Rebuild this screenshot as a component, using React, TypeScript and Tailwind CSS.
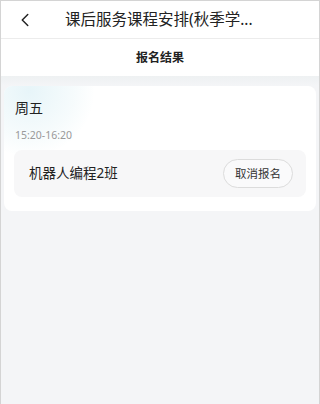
import { ChevronLeft } from 'lucide-react'

const FONT = { fontFamily: '"Noto Sans", "Noto Sans CJK SC", sans-serif' }

export default function App() {
  return (
    <div
      className="w-[320px] h-[404px] flex flex-col bg-[#f4f5f7] border-x border-t border-[#d4d4d4] overflow-hidden"
      style={FONT}
    >
      <div className="h-[37px] shrink-0 flex items-center bg-white">
        <ChevronLeft className="w-[22px] h-[22px] ml-[13px] text-[#222]" strokeWidth={1.6} />
        <div className="ml-[29px] text-[15.5px] text-[#222] leading-none">课后服务课程安排(秋季学...</div>
      </div>
      <div className="h-px bg-[#ececec]" />
      <div className="h-[37px] shrink-0 flex items-center justify-center bg-white">
        <span className="text-[12px] font-bold text-[#222]">报名结果</span>
      </div>
      <div className="h-[10px] bg-gradient-to-b from-[#eef1f2] to-[#f4f5f7]" />
      <div className="mx-[3px] rounded-[8px] bg-white relative overflow-hidden pb-[14px]">
        <div className="absolute -left-[40px] -top-[60px] w-[130px] h-[130px] rounded-full bg-[radial-gradient(circle,rgba(225,242,247,0.8)_0%,rgba(238,248,250,0.5)_50%,rgba(255,255,255,0)_72%)]" />
        <div className="relative">
          <div className="pl-[11px] pt-[12px] text-[14px] text-[#222] leading-[20px]">周五</div>
          <div className="pl-[11px] mt-[10px] text-[10.5px] text-[#999] leading-[14px]">15:20-16:20</div>
          <div className="mx-[10px] mt-[8px] h-[47px] rounded-[8px] bg-[#f7f7f8] flex items-center justify-between pl-[15px] pr-[13px]">
            <span className="text-[13.5px] text-[#222]">机器人编程2班</span>
            <button className="h-[29px] px-[11px] rounded-full border border-[#dcdcdc] bg-white/40 text-[11.5px] text-[#333]">
              取消报名
            </button>
          </div>
        </div>
      </div>
    </div>
  )
}
